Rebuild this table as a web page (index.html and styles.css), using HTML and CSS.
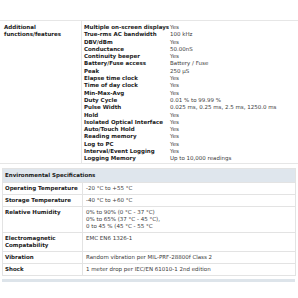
FILE: index.html
```html
<!DOCTYPE html>
<html>
<head>
<meta charset="utf-8">
<link rel="stylesheet" href="styles.css">
</head>
<body>
<div class="page">
  <section class="features">
    <div class="feat-label">Additional functions/features</div>
    <div class="feat-list">
      <div class="k">Multiple on-screen displays</div><div class="v">Yes</div>
      <div class="k">True-rms AC bandwidth</div><div class="v">100 kHz</div>
      <div class="k">DBV/dBm</div><div class="v">Yes</div>
      <div class="k">Conductance</div><div class="v">50.00nS</div>
      <div class="k">Continuity beeper</div><div class="v">Yes</div>
      <div class="k">Battery/Fuse access</div><div class="v">Battery / Fuse</div>
      <div class="k">Peak</div><div class="v">250 µS</div>
      <div class="k">Elapse time clock</div><div class="v">Yes</div>
      <div class="k">Time of day clock</div><div class="v">Yes</div>
      <div class="k">Min-Max-Avg</div><div class="v">Yes</div>
      <div class="k">Duty Cycle</div><div class="v">0.01 % to 99.99 %</div>
      <div class="k">Pulse Width</div><div class="v">0.025 ms, 0.25 ms, 2.5 ms, 1250.0 ms</div>
      <div class="k">Hold</div><div class="v">Yes</div>
      <div class="k">Isolated Optical Interface</div><div class="v">Yes</div>
      <div class="k">Auto/Touch Hold</div><div class="v">Yes</div>
      <div class="k">Reading memory</div><div class="v">Yes</div>
      <div class="k">Log to PC</div><div class="v">Yes</div>
      <div class="k">Interval/Event Logging</div><div class="v">Yes</div>
      <div class="k">Logging Memory</div><div class="v">Up to 10,000 readings</div>
    </div>
  </section>

  <section class="env">
    <div class="env-head">Environmental Specifications</div>
    <div class="env-row">
      <div class="ek">Operating Temperature</div>
      <div class="ev">-20 °C to +55 °C</div>
    </div>
    <div class="env-row">
      <div class="ek">Storage Temperature</div>
      <div class="ev">-40 °C to +60 °C</div>
    </div>
    <div class="env-row">
      <div class="ek">Relative Humidity</div>
      <div class="ev">0% to 90% (0 °C - 37 °C)<br>0% to 65% (37 °C - 45 °C),<br>0 to 45 % (45 °C - 55 °C</div>
    </div>
    <div class="env-row">
      <div class="ek">Electromagnetic Compatability</div>
      <div class="ev">EMC EN6 1326-1</div>
    </div>
    <div class="env-row">
      <div class="ek">Vibration</div>
      <div class="ev">Random vibration per MIL-PRF-28800f Class 2</div>
    </div>
    <div class="env-row">
      <div class="ek">Shock</div>
      <div class="ev">1 meter drop per IEC/EN 61010-1 2nd edition</div>
    </div>
  </section>
  <div class="foot-bar"></div>
</div>
</body>
</html>
```

FILE: styles.css
```css
html, body {
  margin: 0;
  padding: 0;
  background: #ffffff;
}
body {
  font-family: "DejaVu Sans", Verdana, sans-serif;
  font-size: 5.5px;
  color: #333333;
}
.page {
  padding-top: 20px;
}
.features {
  display: grid;
  grid-template-columns: 82px 1fr;
  border-top: 1px solid #e6e6e6;
  border-bottom: 1px solid #e6e6e6;
}
.feat-label {
  font-weight: bold;
  color: #1a1a1a;
  padding: 3px 4px 0 4px;
  line-height: 7px;
  border-right: 1px solid #e6e6e6;
}
.feat-list {
  display: grid;
  grid-template-columns: 86px 1fr;
  grid-auto-rows: 7.3px;
  line-height: 7.3px;
  padding: 3px 0 0 2px;
  white-space: nowrap;
}
.k {
  font-weight: bold;
  color: #1a1a1a;
}
.v {
  color: #3a3a3a;
}
.env {
  margin: 4px 2px 0 2px;
  border: 1px solid #e3e3e3;
  border-top: none;
}
.env-head {
  background: #dfe6ed;
  border-top: 1px solid #e3e3e3;
  font-weight: bold;
  color: #1a1a1a;
  padding: 3px 2px;
  line-height: 7px;
}
.env-row {
  display: grid;
  grid-template-columns: 80px 1fr;
  border-top: 1px solid #e3e3e3;
  line-height: 7px;
}
.ek {
  font-weight: bold;
  color: #1a1a1a;
  padding: 2px 2px;
  border-right: 1px solid #e3e3e3;
}
.ev {
  color: #3a3a3a;
  padding: 2px 3px;
}
.foot-bar {
  margin: 3px 3px 0 2px;
  height: 3px;
  background: #dde4ea;
}
```
